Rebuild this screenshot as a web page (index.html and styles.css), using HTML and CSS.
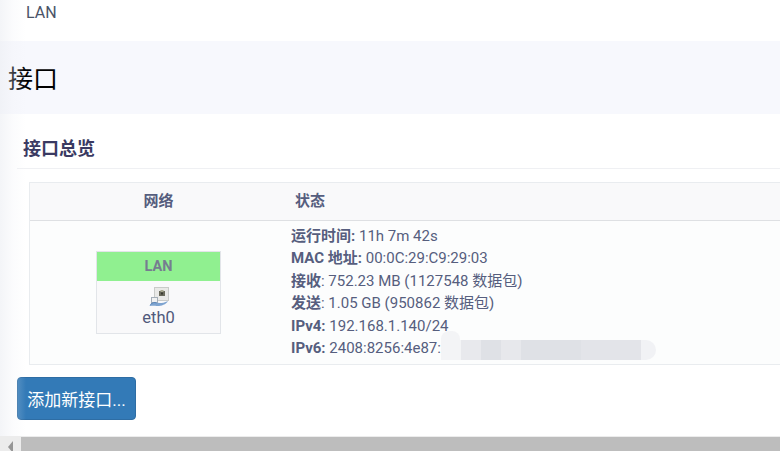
FILE: index.html
```html
<!DOCTYPE html>
<html lang="zh">
<head>
<meta charset="utf-8">
<title>接口</title>
<link rel="stylesheet" href="styles.css">
</head>
<body>
<div class="viewport">
  <div class="edge"></div>
  <div class="crumb">LAN</div>
  <div class="band"><h2>接口</h2></div>
  <main class="card">
    <h3>接口总览</h3>
    <div class="table">
      <div class="thead">
        <div class="col-net">网络</div>
        <div class="col-status">状态</div>
      </div>
      <div class="tbody">
        <div class="col-net cell-net">
          <div class="ifbox">
            <div class="ifname">LAN</div>
            <div class="ifdev">
              <svg class="ificon" width="20" height="20" viewBox="0 0 20 20">
                <rect x="5.500" y="0.500" width="14" height="13" fill="#e9e9e7" stroke="#c9cbc9"/>
                <rect x="10" y="4" width="6" height="5" fill="#6a6a5c"/>
                <rect x="11.500" y="3" width="3" height="2" fill="#a8a890"/>
                <rect x="12" y="5.500" width="2" height="2" fill="#3a3a30"/>
                <rect x="2.500" y="10.500" width="6" height="5" fill="#f0f1f2" stroke="#a4aeb8"/>
                <path d="M0.500 19c1-3 3-4 6-3.500s6 1.500 12.500-1.500c-2 4-8.500 5.500-11.500 5S3 19 0.500 19z" fill="#7ea4d0"/>
                <path d="M1.500 17.500c2-2 4-2.500 6-1.500" stroke="#5a85b8" fill="none"/>
              </svg>
              <div class="devname">eth0</div>
            </div>
          </div>
        </div>
        <div class="col-status cell-status">
          <div><b>运行时间:</b> 11h 7m 42s</div>
          <div><b>MAC 地址:</b> 00:0C:29:C9:29:03</div>
          <div><b>接收</b>: 752.23 MB (1127548 数据包)</div>
          <div><b>发送</b>: 1.05 GB (950862 数据包)</div>
          <div><b>IPv4:</b> 192.168.1.140/24</div>
          <div><b>IPv6:</b> 2408:8256:4e87:</div>
        </div>
      </div>
      <div class="blur"></div>
    </div>
    <button class="add">添加新接口...</button>
  </main>
</div>
<div class="scrollbar">
  <div class="arrow"></div>
  <div class="thumb"></div>
</div>
</body>
</html>
```

FILE: styles.css
```css
* { box-sizing: border-box; }
html, body { margin: 0; height: 100%; overflow: hidden; }
body {
  width: 780px;
  height: 451px;
  background: #fff;
  font-family: Roboto, "Noto Sans CJK SC", sans-serif;
  color: #50597b;
  position: relative;
}
.viewport { height: 436px; overflow: hidden; position: relative; }
.edge {
  position: absolute;
  left: 0; top: 0; bottom: 0;
  width: 26px;
  background: linear-gradient(to right, rgba(236,238,243,.6), rgba(240,241,246,.25) 50%, rgba(255,255,255,0));
  z-index: 2;
  pointer-events: none;
}
.crumb {
  height: 41px;
  padding: 3px 0 0 26px;
  font-size: 16px;
  line-height: 19px;
  color: #4a5468;
  background: #fff;
}
.band {
  height: 73px;
  background: #f7f8fd;
  padding: 21px 0 0 8px;
}
.band h2 {
  margin: 0;
  font-size: 25px;
  line-height: 35px;
  font-weight: 400;
  color: #000;
}
.card {
  width: 1000px;
  height: 330px;
  background: #fff;
  border-radius: 6px 0 0 0;
  padding: 0 0 0 17px;
}
.card h3 {
  margin: 0;
  height: 55px;
  border-bottom: 1px solid #eff0f3;
  padding: 24px 0 0 6px;
  font-size: 18px;
  line-height: 22px;
  font-weight: 700;
  color: #3a3a62;
}
.table {
  position: relative;
  margin: 13px 0 0 12px;
  border: 1px solid #e9ecef;
  background: #fcfdfd;
  height: 183px;
}
.thead {
  display: flex;
  height: 38px;
  background: #f9f9fa;
  border-bottom: 1px solid #dee0e3;
  font-size: 15px;
  font-weight: 700;
  line-height: 36px;
  color: #565e7e;
}
.col-net { width: 257px; text-align: center; flex: none; }
.col-status { flex: 1; padding-left: 8px; }
.tbody { display: flex; height: 144px; }
.cell-net { display: flex; padding: 30px 0 0 66px; }
.ifbox {
  width: 125px;
  height: 83px;
  border: 1px solid #e2e5e9;
  background: #f9f9fa;
  text-align: center;
}
.ifname {
  height: 29px;
  background: #90f090;
  font-size: 14.5px;
  font-weight: 700;
  line-height: 30px;
  color: #767d90;
}
.ifdev { padding-top: 6px; }
.ificon { display: block; margin: 0 auto; }
.devname { font-size: 16.5px; line-height: 21px; color: #50597b; }
.cell-status {
  padding: 3.5px 0 0 4px;
  font-size: 15px;
  line-height: 22.6px;
  color: #565e7e;
}
.cell-status b { font-weight: 700; }
.blur {
  position: absolute;
  left: 411px;
  top: 157px;
  width: 215px;
  height: 20px;
  border-radius: 0 10px 10px 0;
  background: linear-gradient(to right, #f3f4f6 0 20px, #e8e9ed 20px 40px, #dfe1e6 40px 60px, #e7e8ec 60px 80px, #dfe1e6 80px 140px, #e3e4e9 140px 200px, #f1f2f5 200px);
}
.blur::before {
  content: "";
  position: absolute;
  left: 0;
  top: -9px;
  width: 19px;
  height: 9px;
  background: #f3f4f6;
  border-radius: 8px 8px 0 0;
}
.add {
  display: block;
  margin-top: 12px;
  width: 119px;
  height: 43px;
  background: #337ab7;
  border: 1px solid #2e6da4;
  border-radius: 4px;
  color: #fff;
  font-family: inherit;
  font-size: 17px;
  padding: 0;
}
.scrollbar {
  position: absolute;
  left: 0;
  bottom: 0;
  width: 780px;
  height: 15px;
  background: #ececec;
  padding-top: 1px;
  display: flex;
  align-items: stretch;
}
.arrow { width: 21px; position: relative; }
.arrow::before {
  content: "";
  position: absolute;
  left: 8px;
  top: 4px;
  border-style: solid;
  border-color: transparent #969696 transparent transparent;
  border-width: 6px 5px 6px 0;
}
.thumb { flex: 1; background: #bdbdbd; }
```
